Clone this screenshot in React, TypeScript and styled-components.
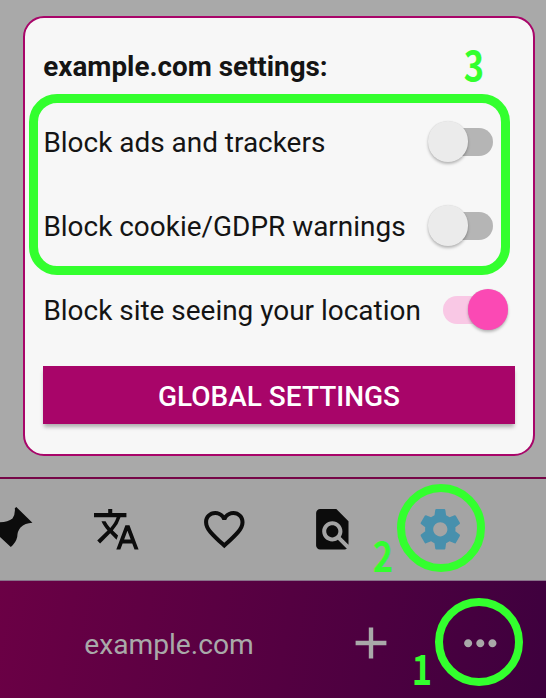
import React from "react";
import styled, { createGlobalStyle } from "styled-components";
import {
  MdFavoriteBorder,
  MdFindInPage,
  MdMoreHoriz,
  MdTranslate,
} from "react-icons/md";

const GlobalStyle = createGlobalStyle`
  * { box-sizing: border-box; }
  body { margin: 0; overflow: hidden; background: #a9a9a9; }
`;

const GREEN = "#33ff2e";

const Screen = styled.div`
  position: relative;
  width: 546px;
  height: 698px;
  display: flex;
  flex-direction: column;
  overflow: hidden;
  background: #a9a9a9;
  font-family: Roboto, sans-serif;
  color: #141414;
`;

const Stage = styled.main`
  height: 477px;
  padding: 16px 11px 0 23px;
`;

const Panel = styled.section`
  height: 440px;
  padding: 0 18px;
  display: flex;
  flex-direction: column;
  border: 2px solid #a80569;
  border-radius: 21px;
  background: #f7f7f7;
`;

const Title = styled.h1`
  margin: 31px 0 16px 0.3px;
  font-size: 27.8px;
  line-height: 36px;
  font-weight: 700;
  white-space: nowrap;
`;

const SettingRow = styled.label<{ $inset: number }>`
  height: 84px;
  flex: none;
  display: flex;
  align-items: center;
  justify-content: space-between;
  padding-left: 0.4px;
  padding-right: ${(p) => p.$inset}px;
  font-size: 27.95px;
  line-height: 34px;
  white-space: nowrap;
`;

const SettingLabel = styled.span`
  padding-bottom: 1px;
`;

const Track = styled.span<{ $on?: boolean }>`
  width: 60px;
  height: 28px;
  margin: ${(p) => (p.$on ? "0 5px 3px 0" : "0 0 2px 5px")};
  flex: none;
  display: flex;
  align-items: center;
  justify-content: ${(p) => (p.$on ? "flex-end" : "flex-start")};
  border-radius: 14px;
  background: ${(p) => (p.$on ? "#f9c8e5" : "#b5b5b5")};
`;

const Thumb = styled.span<{ $on?: boolean }>`
  width: 40.5px;
  height: 40.5px;
  flex: none;
  margin: ${(p) => (p.$on ? "0 -5px 0 0" : "0 0 1px -5.5px")};
  border-radius: 50%;
  background: ${(p) => (p.$on ? "#fb49b4" : "#ebebeb")};
  box-shadow: 0 2px 3px rgba(0, 0, 0, 0.26), 0 0 1px rgba(0, 0, 0, 0.12);
`;

const GlobalButton = styled.button`
  height: 58px;
  flex: none;
  margin: 13px 0 0;
  padding: 4px 0 0;
  border: 0;
  background: #a80569;
  color: #fff;
  font: 500 28px/34px Roboto, sans-serif;
  box-shadow: 0 4px 4px -1px rgba(0, 0, 0, 0.3);
`;

const Toolbar = styled.nav`
  height: 104px;
  flex: none;
  padding-bottom: 1px;
  display: grid;
  grid-template-columns: 62px repeat(4, 108.2px);
  align-items: center;
  justify-items: center;
  border-top: 2px solid #760748;
  border-bottom: 1px solid #89718a;
  background: #a4a4a4;
  color: #0c0c0c;
  svg { width: 48.6px; height: 48.6px; display: block; }
`;

const PinSlot = styled.span`
  justify-self: start;
  padding-bottom: 4px;
  svg { width: 34px; height: 44px; }
`;

const Accent = styled.span`
  color: #4790ad;
`;

const AddressBar = styled.footer`
  flex: 1;
  display: grid;
  grid-template-columns: 338px 65px 1fr;
  align-items: center;
  justify-items: center;
  padding-top: 7px;
  background: linear-gradient(100deg, #6b0045 0%, #540041 52%, #3e003e 100%);
  color: #a9a9a9;
  svg { display: block; }
`;

const Domain = styled.span`
  font-size: 28.2px;
  line-height: 34px;
  padding-top: 3px;
`;

const MoreSlot = styled.span`
  justify-self: start;
  margin-left: 52.5px;
`;

const HighlightBox = styled.div`
  position: absolute;
  left: 29px;
  top: 94px;
  width: 481px;
  height: 181px;
  border: 9px solid ${GREEN};
  border-radius: 28px;
`;

const HighlightRing = styled.div<{ $x: number; $y: number }>`
  position: absolute;
  left: ${(p) => p.$x}px;
  top: ${(p) => p.$y}px;
  width: 88px;
  height: 88px;
  border: 8px solid ${GREEN};
  border-radius: 50%;
`;

const StepNumber = styled.span<{ $x: number; $y: number }>`
  position: absolute;
  left: ${(p) => p.$x}px;
  top: ${(p) => p.$y}px;
  width: 30px;
  text-align: center;
  color: ${GREEN};
  font: 700 41px/44px "Noto Sans CJK SC", sans-serif;
  transform: scaleX(0.84);
`;

function PinIcon() {
  return (
    <svg viewBox="0 0 34 44" fill="currentColor">
      <path d="M16.3 2L32.4 17.7Q25 18 20.5 22.5Q17.4 26 17.2 32Q16 37.5 10.8 42L0 32V17.3Q8 17 12.5 13.5Q15.5 9 14.8 3.2Z" />
    </svg>
  );
}

function GearIcon() {
  return (
    <svg viewBox="0 0 24 24" fill="currentColor">
      <path d="M19.43 12.98c.04-.32.07-.64.07-.98s-.03-.66-.07-.98l2.11-1.65c.19-.15.24-.42.12-.64l-2-3.46c-.12-.22-.39-.3-.61-.22l-2.49 1c-.52-.4-1.08-.73-1.69-.98l-.38-2.65C14.46 2.18 14.25 2 14 2h-4c-.25 0-.46.18-.49.42l-.38 2.65c-.61.25-1.17.59-1.69.98l-2.49-1c-.23-.09-.49 0-.61.22l-2 3.46c-.13.22-.07.49.12.64l2.11 1.65c-.04.32-.07.65-.07.98s.03.66.07.98l-2.11 1.65c-.19.15-.24.42-.12.64l2 3.46c.12.22.39.3.61.22l2.49-1c.52.4 1.08.73 1.69.98l.38 2.65c.03.24.24.42.49.42h4c.25 0 .46-.18.49-.42l.38-2.65c.61-.25 1.17-.59 1.69-.98l2.49 1c.23.09.49 0 .61-.22l2-3.46c.12-.22.07-.49-.12-.64l-2.11-1.65zM12 15.5c-1.93 0-3.5-1.57-3.5-3.5s1.57-3.5 3.5-3.5 3.5 1.57 3.5 3.5-1.57 3.5-3.5 3.5z" />
    </svg>
  );
}

function PlusIcon() {
  return (
    <svg width="32" height="32" viewBox="0 0 32 32" stroke="currentColor" strokeWidth="4.4">
      <path d="M16 .6V31.4M.6 16H31.4" />
    </svg>
  );
}

export default function App() {
  return (
    <Screen>
      <GlobalStyle />
      <Stage>
        <Panel>
          <Title>example.com settings:</Title>
          <SettingRow $inset={22}>
            <SettingLabel>Block ads and trackers</SettingLabel>
            <Track><Thumb /></Track>
          </SettingRow>
          <SettingRow $inset={22}>
            <SettingLabel>Block cookie/GDPR warnings</SettingLabel>
            <Track><Thumb /></Track>
          </SettingRow>
          <SettingRow $inset={7}>
            <SettingLabel>Block site seeing your location</SettingLabel>
            <Track $on><Thumb $on /></Track>
          </SettingRow>
          <GlobalButton>GLOBAL SETTINGS</GlobalButton>
        </Panel>
      </Stage>
      <Toolbar>
        <PinSlot><PinIcon /></PinSlot>
        <MdTranslate />
        <MdFavoriteBorder />
        <MdFindInPage />
        <Accent><GearIcon /></Accent>
      </Toolbar>
      <AddressBar>
        <Domain>example.com</Domain>
        <PlusIcon />
        <MoreSlot><MdMoreHoriz size={48.6} /></MoreSlot>
      </AddressBar>
      <HighlightBox />
      <HighlightRing $x={397} $y={484} />
      <HighlightRing $x={435} $y={598} />
      <StepNumber $x={459} $y={41}>3</StepNumber>
      <StepNumber $x={368} $y={532}>2</StepNumber>
      <StepNumber $x={407} $y={645}>1</StepNumber>
    </Screen>
  );
}
